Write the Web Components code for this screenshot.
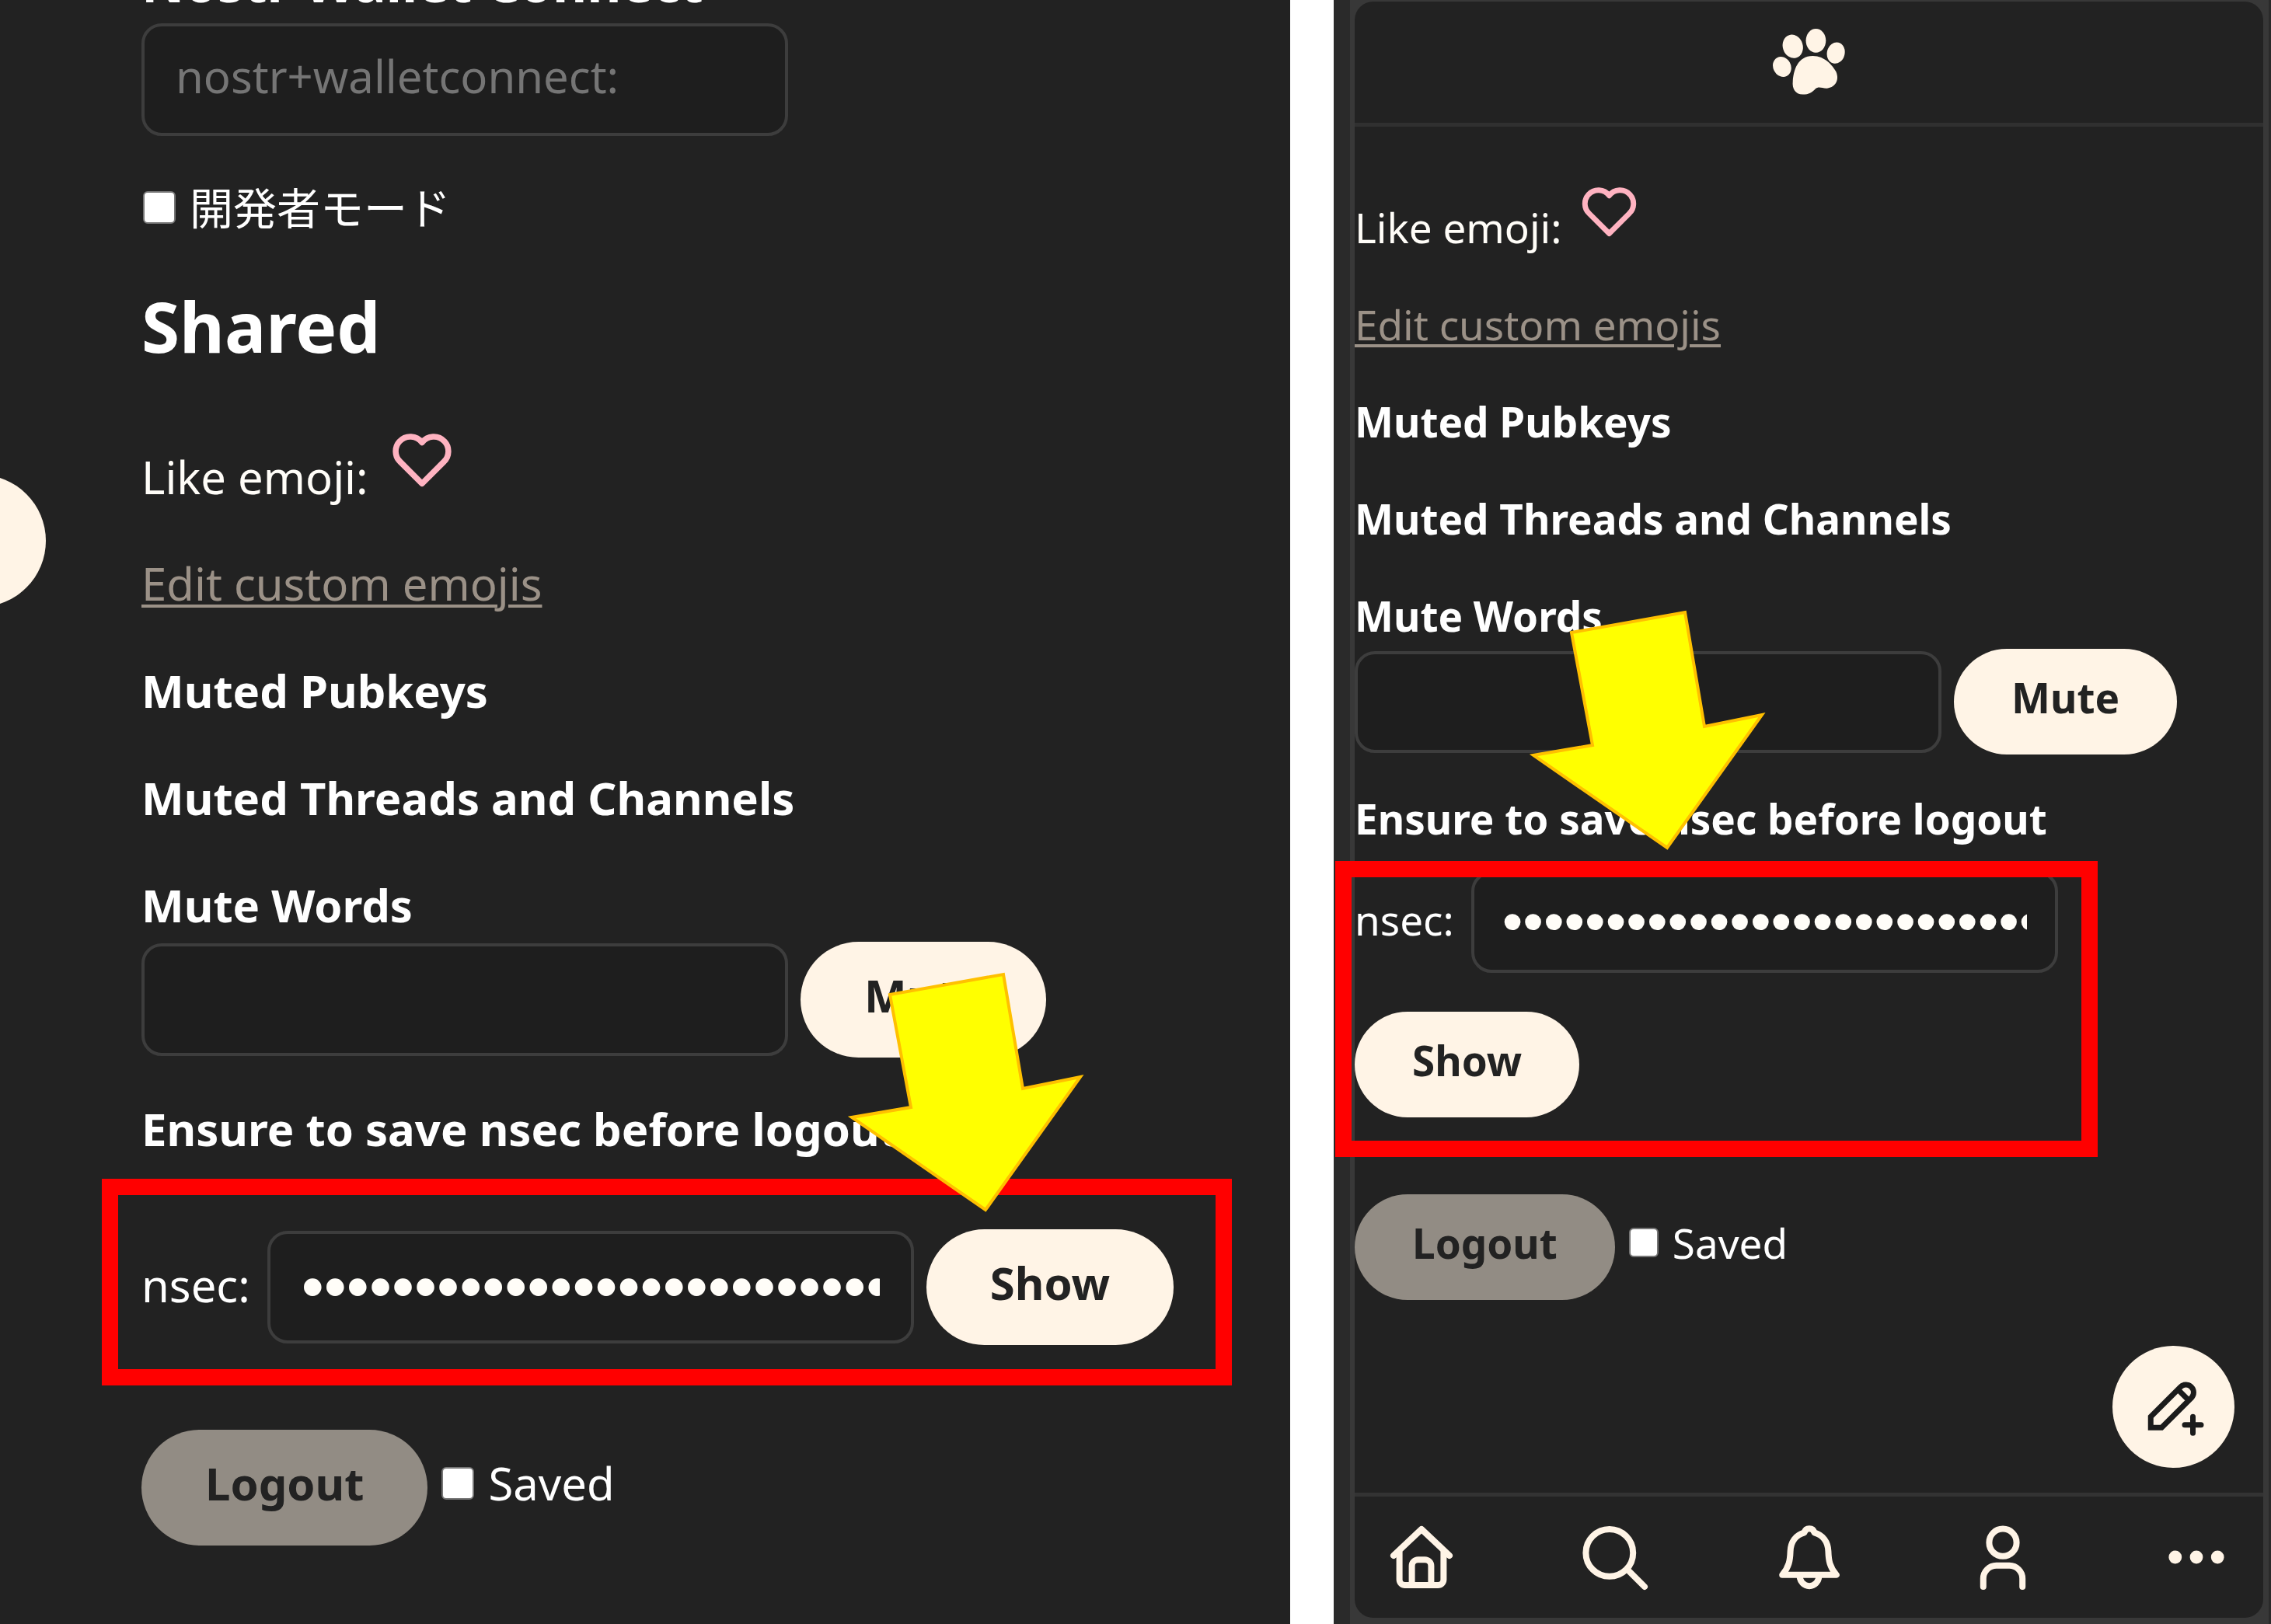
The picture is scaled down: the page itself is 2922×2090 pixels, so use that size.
<!DOCTYPE html>
<html lang="ja">
<head>
<meta charset="utf-8">
<title>Settings</title>
<style>
  body { margin: 0; background: #fff; }
</style>
</head>
<body>
<guide-page></guide-page>

<script>
const ICONS = {
  heart: '<path d="M19.5 12.6 12 20.1 4.5 12.6a5 5 0 0 1-.2-7A5 5 0 0 1 12 6a5 5 0 0 1 7.7-.4 5 5 0 0 1-.2 7z"/>',
  paw: '<g fill="currentColor" stroke="none"><ellipse cx="12" cy="49" rx="11.500" ry="13.500" transform="rotate(-28 12 49)"/><ellipse cx="26" cy="22.500" rx="13" ry="15.500" transform="rotate(-18 26 22.5)"/><ellipse cx="56" cy="15" rx="13" ry="15.500"/><ellipse cx="82" cy="31" rx="11.500" ry="14" transform="rotate(14 82 31)"/><path d="M52 35C68 35 78 48 82 55C88 68 79 77 70 77C63 77 60 74 55 78C51 82 47 85 39 85C29 85 25 77 26 68C27 54 32 35 52 35Z"/></g>',
  home: '<path d="M3 11.500 12 3l9 8.500M4.900 10v9.200A1.800 1.800 0 0 0 6.700 21h10.600a1.800 1.800 0 0 0 1.800-1.800V10M8.900 21v-6.200a2 2 0 0 1 2-2h2.200a2 2 0 0 1 2 2V21"/>',
  search: '<circle cx="10.200" cy="10.600" r="7.600"/><path d="m16 16 5.500 5.500"/>',
  bell: '<path d="M12 2.800c.9 0 1.400.5 1.600 1.300 2.800.8 4.400 3 4.500 6 .1 3 .4 5 2.600 7.600H3.300c2.200-2.600 2.500-4.600 2.600-7.600.1-3 1.700-5.200 4.500-6 .2-.8.7-1.300 1.600-1.300zM8.900 18a3.100 3.300 0 0 0 6.200 0"/>',
  user: '<circle cx="12" cy="7.300" r="4.400"/><path d="M5.700 21.500v-2.600a4.200 4.200 0 0 1 4.200-4.200h4.200a4.200 4.200 0 0 1 4.200 4.200v2.600"/>',
  more: '<g fill="currentColor" stroke="none"><circle cx="5.200" cy="12" r="2.100"/><circle cx="12" cy="12" r="2.100"/><circle cx="18.800" cy="12" r="2.100"/></g>',
  pen: '<path stroke-linecap="square" stroke-linejoin="miter" d="M3.500 19.500h4L18.500 8.500a2.830 2.830 0 0 0-4-4L3.500 15.500zM13.500 5.500l4 4"/><path d="M16 18.500h6M19 15.500v6"/>'
};

function define(name, css, html) {
  customElements.define(name, class extends HTMLElement {
    constructor() {
      super();
      const render = typeof html === 'function' ? html(this) : html;
      this.attachShadow({ mode: 'open' }).innerHTML = `<style>:host,*{box-sizing:border-box}${css}</style>${render}`;
    }
  });
}

define('app-icon', `
  :host { display: block; width: var(--icon, 96px); height: var(--icon, 96px); flex: none; }
  svg { display: block; width: 100%; height: 100%; fill: none; stroke: currentColor; stroke-width: 2; stroke-linecap: round; stroke-linejoin: round; }
`, el => {
  const name = el.getAttribute('name');
  const box = name === 'paw' ? '0 0 95 86' : '0 0 24 24';
  return `<svg viewBox="${box}" aria-hidden="true">${ICONS[name]}</svg>`;
});

define('pill-button', `
  :host { display: block; flex: none; }
  button { display: flex; align-items: center; height: var(--button); padding: 0 var(--pill) 12px; border: 0; border-radius: 80px;
    background: #fff4e6; color: #222; font: inherit; font-weight: 700; }
  :host([muted]) button { background: #928c84; color: #222; }
`, el => `<button type="button"${el.hasAttribute('muted') ? ' disabled' : ''}><slot></slot></button>`);

define('text-field', `
  :host { display: flex; flex: none; align-items: center; gap: 22px; }
  :host([stacked]) { flex-direction: column; align-items: flex-start; gap: 6px; }
  label { padding-bottom: 6px; }
  :host([stacked]) label { font-weight: 700; padding: 0; }
  :host([large]) { gap: 14px; }
  :host([large]) label { font-size: 68px; line-height: 74px; }
  input { width: var(--field); height: var(--input); margin: 2px 0; padding: 0 var(--inset) 10px; border: 4px solid #3d3d3d; border-radius: 26px;
    background: #1e1e1e; color: #fffdf8; font: inherit; line-height: 80px; outline: none; }
  input::placeholder { color: #757575; opacity: 1; }
  input[type=password] { font-family: "Liberation Sans", sans-serif; font-size: var(--dots); padding-bottom: 2px; }
`, el => `<label for="f">${el.getAttribute('label')}</label>
  <input id="f" type="${el.getAttribute('type') || 'text'}" placeholder="${el.getAttribute('placeholder') || ''}" value="${el.getAttribute('value') || ''}">`);

define('check-field', `
  :host { display: flex; flex: none; align-items: center; gap: 18px; }
  input { appearance: none; flex: none; width: var(--check); height: var(--check); margin: 0 0 0 2px; border: 2px solid #767676; border-radius: 6px; background: #fff; }
`, '<input type="checkbox" id="c"><label for="c"><slot></slot></label>');

define('note-frame', `
  :host { display: block; position: absolute; border: 21px solid #f00; pointer-events: none; }
`, '');

define('note-arrow', `
  :host { display: block; position: absolute; width: 302px; height: 309px; pointer-events: none; }
  svg { display: block; overflow: visible; }
`, `<svg width="302" height="309" viewBox="0 0 302 309" aria-hidden="true">
  <path d="M53 29 199 3 224 150 298 135 176 306 4 187 80 174Z" fill="#ff0" stroke="#ffc000" stroke-width="4"/></svg>`);

const SHARED = `
  .row { display: flex; align-items: center; gap: 16px; }
  .end { align-items: flex-end; }
  p, h2, h3 { margin: 0; }
  h3 { font-size: inherit; font-weight: 700; }
  a { color: #9b9187; text-decoration-thickness: 4px; text-underline-offset: 5px; }
  .like { display: flex; align-items: flex-start; color: #fffdf8; }
  .like app-icon { color: #ffb3c1; }
  .lines { display: flex; flex-direction: column; }
  check-field.saved { padding-bottom: 12px; }
`;
const SECRET = 'nsec1' + 'q'.repeat(58);

define('desktop-settings', `
  :host { display: block; position: relative; overflow: hidden; background: #222; color: #fff;
    font: 58px/82px "Noto Sans", "Noto Sans CJK JP", sans-serif;
    --field: 832px; --input: 145px; --button: 149px; --pill: 82px; --check: 42px; --dots: 83px; --inset: 40px; }
  ${SHARED}
  .content { margin: -60px 0 0; padding: 0 0 97px 182px; }
  .dev { margin: 49px 0 52px; font-size: 56px; }
  h2 { font-size: 89px; line-height: 120px; }
  .like { margin: 67px 0 55px; gap: 24px; --icon: 90px; }
  .like span { padding-top: 26px; }
  .lines { gap: 56px; }
  .warn { margin: 51px 0 88px; }
  .out { margin-top: 109px; }
  .post { position: absolute; left: -111px; top: 611px; width: 170px; height: 170px; border: 0; border-radius: 50%; background: #fff4e6; }
  note-frame { left: 131px; top: 1517px; width: 1454px; height: 266px; }
  note-arrow { left: 1092px; top: 1251px; }
`, `
  <button class="post" type="button" aria-label="Post"></button>
  <div class="content">
    <text-field large stacked label="Nostr Wallet Connect" placeholder="nostr+walletconnect:"></text-field>
    <check-field class="dev">開発者モード</check-field>
    <h2>Shared</h2>
    <div class="like"><span>Like emoji:</span><app-icon name="heart"></app-icon></div>
    <div class="lines">
      <p><a href="#emojis">Edit custom emojis</a></p>
      <h3>Muted Pubkeys</h3>
      <h3>Muted Threads and Channels</h3>
      <div class="row end"><text-field stacked label="Mute Words"></text-field><pill-button>Mute</pill-button></div>
    </div>
    <h3 class="warn">Ensure to save nsec before logout</h3>
    <div class="row"><text-field label="nsec:" type="password" value="${SECRET}"></text-field><pill-button>Show</pill-button></div>
    <div class="row out"><pill-button muted>Logout</pill-button><check-field class="saved">Saved</check-field></div>
  </div>
  <note-frame></note-frame>
  <note-arrow></note-arrow>`);

define('bottom-nav', `
  :host { display: block; }
  nav { display: flex; justify-content: space-between; align-items: center; height: 161px; padding: 0 38px; border-top: 5px solid #333; }
  a { color: #fff4e6; }
`, `<nav>${['home', 'search', 'bell', 'user', 'more'].map(n => `<a href="#${n}" aria-label="${n}"><app-icon name="${n}"></app-icon></a>`).join('')}</nav>`);

define('mobile-settings', `
  :host { display: flex; position: relative; overflow: hidden; padding: 0 3px 0 21px; background: #2a2a2a; color: #fff;
    font: 53px/75px "Noto Sans", "Noto Sans CJK JP", sans-serif;
    --field: 755px; --input: 131px; --button: 136px; --pill: 74px; --check: 38px; --dots: 76px; --inset: 36px; }
  ${SHARED}
  .frame { display: flex; flex: 1; padding: 2px 7px 8px 6px; background: #383838; }
  .screen { display: flex; flex: 1; flex-direction: column; position: relative; border-radius: 24px; background: #222; }
  header { display: flex; justify-content: center; align-items: center; height: 161px; border-bottom: 5px solid #303030; color: #fff4e6; --icon: 94px; }
  main { flex: 1; padding-top: 68px; }
  .like { margin-bottom: 50px; gap: 20px; --icon: 83px; }
  .like span { padding-top: 24px; }
  .lines { gap: 50px; }
  .warn { margin: 45px 0 28px; }
  .wrap { display: flex; flex-direction: column; align-items: flex-start; gap: 48px; }
  .out { margin-top: 99px; }
  .post { display: flex; justify-content: center; align-items: center; position: absolute; right: 37px; bottom: 193px; width: 157px; height: 157px;
    padding: 0; border: 0; border-radius: 50%; background: #fff4e6; color: #1b1b1b; --icon: 84px; }
  note-frame { left: 2px; top: 1108px; width: 981px; height: 381px; }
  note-arrow { left: 253px; top: 785px; }
`, `
  <div class="frame"><div class="screen">
    <header><app-icon name="paw"></app-icon></header>
    <main>
      <div class="like"><span>Like emoji:</span><app-icon name="heart"></app-icon></div>
      <div class="lines">
        <p><a href="#emojis">Edit custom emojis</a></p>
        <h3>Muted Pubkeys</h3>
        <h3>Muted Threads and Channels</h3>
        <div class="row end"><text-field stacked label="Mute Words"></text-field><pill-button>Mute</pill-button></div>
      </div>
      <h3 class="warn">Ensure to save nsec before logout</h3>
      <div class="wrap"><text-field label="nsec:" type="password" value="${SECRET}"></text-field><pill-button>Show</pill-button></div>
      <div class="row out"><pill-button muted>Logout</pill-button><check-field class="saved">Saved</check-field></div>
    </main>
    <button class="post" type="button" aria-label="New post"><app-icon name="pen"></app-icon></button>
    <bottom-nav></bottom-nav>
  </div></div>
  <note-frame></note-frame>
  <note-arrow></note-arrow>`);

define('guide-page', `
  :host { display: grid; grid-template-columns: minmax(0, 1660fr) minmax(0, 1206fr); gap: 56px; min-height: 100vh; }
`, '<desktop-settings></desktop-settings><mobile-settings></mobile-settings>');
</script>
</body>
</html>
